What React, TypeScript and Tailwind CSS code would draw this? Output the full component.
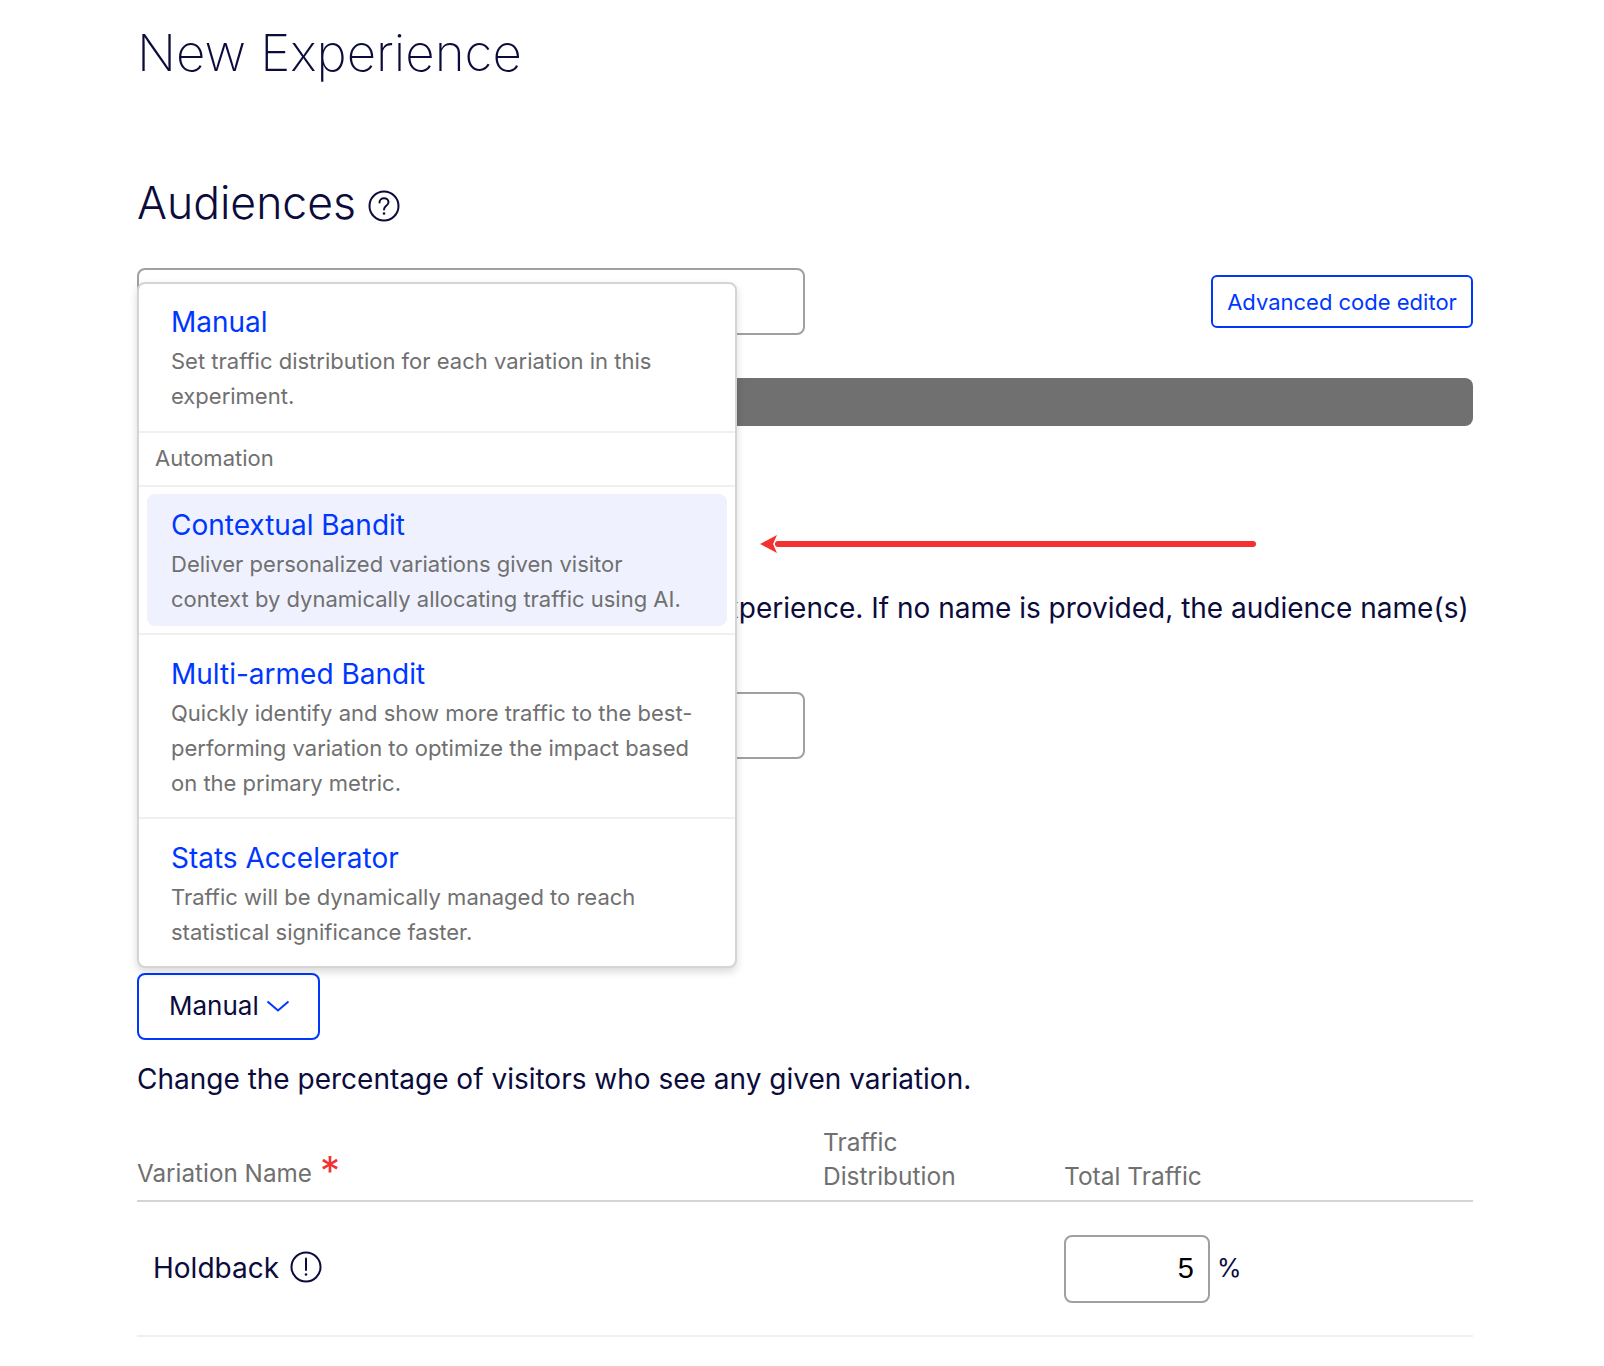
import React from 'react';

const options = [
  {
    title: 'Contextual Bandit',
    lines: ['Deliver personalized variations given visitor', 'context by dynamically allocating traffic using AI.'],
  },
  {
    title: 'Multi-armed Bandit',
    lines: [
      'Quickly identify and show more traffic to the best-',
      'performing variation to optimize the impact based',
      'on the primary metric.',
    ],
  },
  {
    title: 'Stats Accelerator',
    lines: ['Traffic will be dynamically managed to reach', 'statistical significance faster.'],
  },
];

function OptionBody({ title, lines }: { title: string; lines: string[] }) {
  return (
    <>
      <div className="text-[28px] leading-[36px] text-[#0037ff]">{title}</div>
      <div className="mt-[4px] text-[22px] leading-[35px] text-[#707070]">
        {lines.map((line) => (
          <div key={line} className="whitespace-nowrap">{line}</div>
        ))}
      </div>
    </>
  );
}

function HelpIcon() {
  return (
    <svg className="mt-[6px]" width="32" height="32" viewBox="0 0 32 32" fill="none" stroke="#0b0b3c" strokeWidth="2">
      <circle cx="16" cy="16" r="14.5" />
      <path d="M11.5 12.5c0-2.6 2-4.300 4.500-4.300s4.500 1.600 4.500 4c0 3.600-4.500 3.700-4.500 7.300" strokeLinecap="round" />
      <circle cx="16" cy="23.500" r="1.300" fill="#0b0b3c" stroke="none" />
    </svg>
  );
}

function AlertIcon() {
  return (
    <svg className="-translate-y-[1px]" width="32" height="32" viewBox="0 0 32 32" fill="none" stroke="#0b0b3c" strokeWidth="2">
      <circle cx="16" cy="16" r="14.5" />
      <path d="M16 7.500v11.500" strokeLinecap="round" />
      <circle cx="16" cy="23.500" r="1.300" fill="#0b0b3c" stroke="none" />
    </svg>
  );
}

export default function App() {
  return (
    <div className="h-[1366px] overflow-hidden bg-white pl-[137px] pr-[131px] font-[Inter,sans-serif] text-[#0b0b3c]">
      <h1 className="pt-[20px] text-[51px] font-extralight leading-[66px]">New Experience</h1>

      <div className="mt-[87px] flex items-center gap-[12px]">
        <h2 className="text-[44.500px] font-light leading-[60px]">Audiences</h2>
        <HelpIcon />
      </div>

      <div className="mt-[35px] flex items-center justify-between">
        <div className="h-[67px] w-[668px] rounded-[8px] border-2 border-[#a0a0a0]" />
        <button className="h-[53px] w-[262px] rounded-[6px] border-2 border-[#0037ff] pt-[2px] text-[22px] text-[#0037ff]">
          Advanced code editor
        </button>
      </div>

      <div className="mt-[43px] h-[48px] rounded-[8px] bg-[#707070]" />

      <div className="relative mt-[165px] h-[101px] text-[28px] leading-[36px]">
        <p className="-translate-y-[1px]">Enter a descriptive name to be kept for the experience. If no name is provided, the audience name(s) will be used.</p>
        {/* red annotation arrow */}
        <svg className="absolute left-[623px] top-[-57px]" width="500" height="20" viewBox="0 0 500 20">
          <path d="M18 10H493" stroke="#f43030" strokeWidth="6" strokeLinecap="round" />
          <path d="M0 10 17 1 13 10 17 19Z" fill="#f43030" />
        </svg>
      </div>

      <div className="h-[67px] w-[668px] rounded-[8px] border-2 border-[#a0a0a0]" />

      <div className="relative mt-[214px] w-[183px]">
        <button className="flex h-[67px] w-[183px] items-center gap-[7px] rounded-[8px] border-2 border-[#0037ff] pb-[2px] pl-[30px] text-[26px]">
          Manual
          <svg width="24" height="12" viewBox="0 0 24 12" fill="none" stroke="#0037ff" strokeWidth="2">
            <path d="M1.500 1.500 12 10.500 22.500 1.500" />
          </svg>
        </button>

        <div className="absolute bottom-full left-0 z-10 mb-[5px] w-[600px] rounded-[8px] border-2 border-[#d4d4d4] bg-white shadow-[0_4px_8px_rgba(0,0,0,0.15)]">
          <div className="h-[147px] px-[32px] pt-[20px]">
            <OptionBody title="Manual" lines={['Set traffic distribution for each variation in this', 'experiment.']} />
          </div>
          <div className="flex h-[56px] items-center border-y-2 border-[#f0f0f0] px-[16px] pb-[2px] text-[22px] text-[#707070]">
            Automation
          </div>
          <div className="h-[148px] border-b-2 border-[#f0f0f0] px-[8px] pt-[7px]">
            <div className="h-[132px] rounded-[8px] bg-[#eff2fe] px-[24px] pt-[13px]">
              <OptionBody {...options[0]} />
            </div>
          </div>
          <div className="h-[184px] border-b-2 border-[#f0f0f0] px-[32px] pt-[21px]">
            <OptionBody {...options[1]} />
          </div>
          <div className="h-[147px] px-[32px] pt-[21px]">
            <OptionBody {...options[2]} />
          </div>
        </div>
      </div>

      <p className="mt-[21px] text-[28px] leading-[36px]">
        Change the percentage of visitors who see any given variation.
      </p>

      <div className="mt-[27px] flex h-[78px] items-end border-b-2 border-[#d4d4d4] pb-[7px] text-[24.500px] leading-[34px] text-[#707070]">
        <div className="relative mb-[2px] w-[686px] text-[24.250px]">
          Variation Name
          <span className="absolute left-[183px] top-[-3px] text-[40px] leading-[34px] text-[#f43030]">*</span>
        </div>
        <div className="w-[241px]">Traffic<br />Distribution</div>
        <div>Total Traffic</div>
      </div>

      <div className="flex h-[135px] items-center border-b-2 border-[#f0f0f0]">
        <div className="flex w-[927px] -translate-y-[1px] items-center gap-[11px] pl-[16px] text-[28px]">
          Holdback
          <AlertIcon />
        </div>
        <div className="flex h-[68px] w-[146px] items-center justify-end rounded-[8px] border-2 border-[#a0a0a0] pr-[14px] font-['Liberation_Sans',sans-serif] text-[29px] text-black">
          5
        </div>
        <span className="ml-[7px] text-[25px]">%</span>
      </div>
    </div>
  );
}
